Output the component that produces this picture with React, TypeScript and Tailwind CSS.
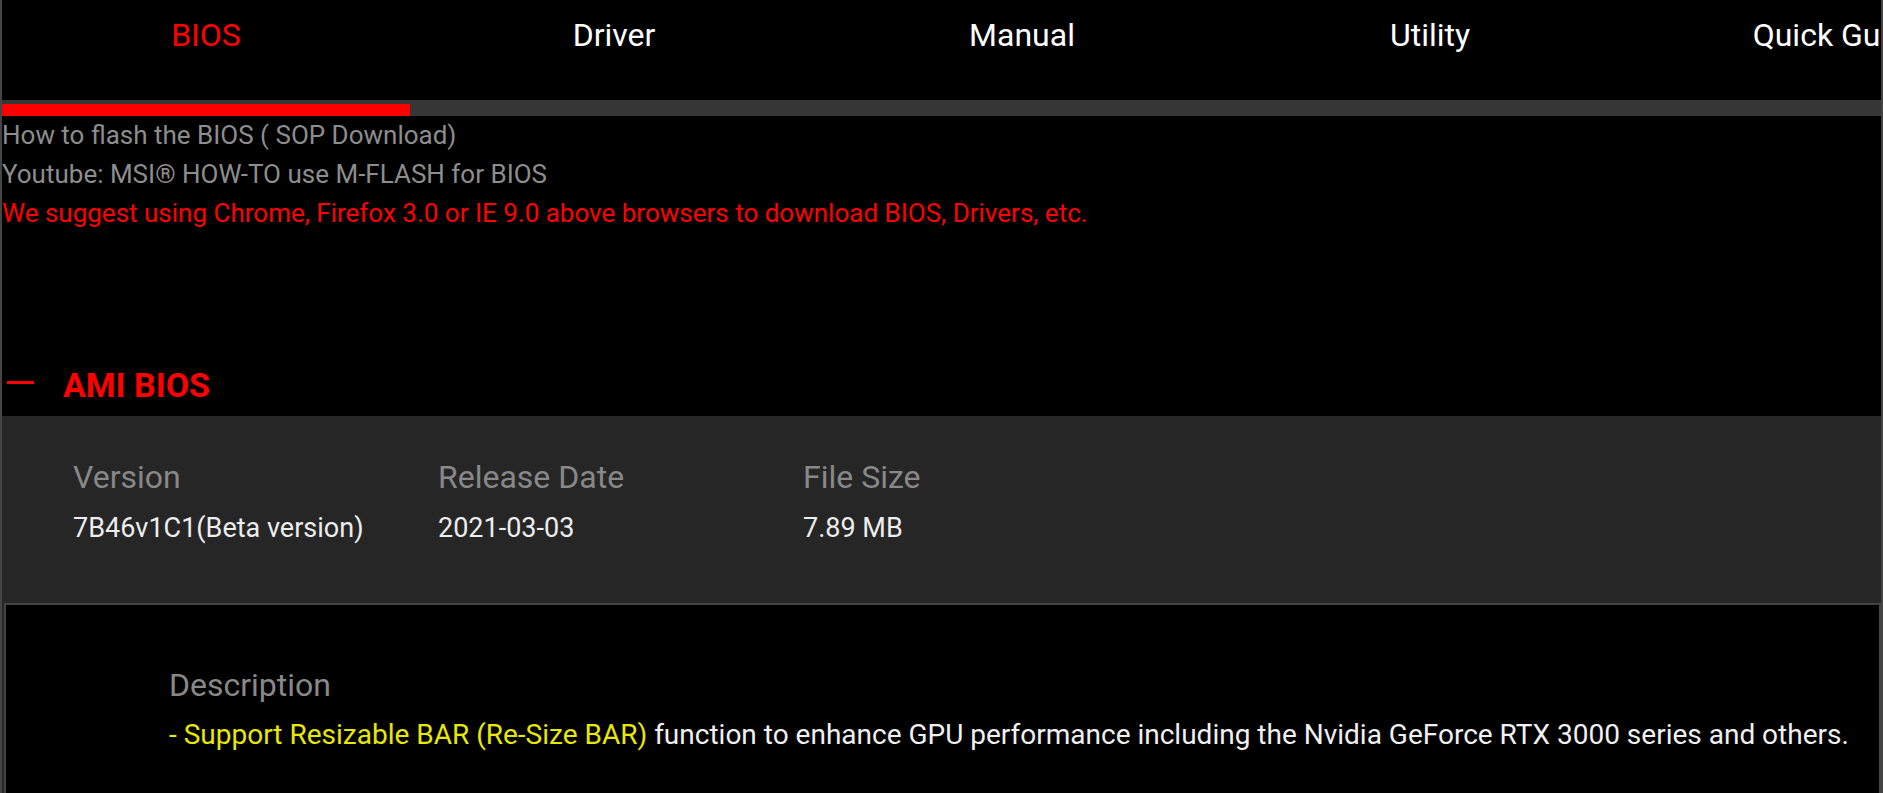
import React from "react";

const tabs = ["BIOS", "Driver", "Manual", "Utility", "Quick Guide"];

function Column({ label, value }: { label: string; value: string }) {
  return (
    <div className="w-[365px] shrink-0">
      <div className="text-[32px] leading-[40px] text-[#888888]">{label}</div>
      <div className="mt-[11px] text-[27px] leading-[40px] text-[#ededed]">{value}</div>
    </div>
  );
}

export default function App() {
  return (
    <div
      className="w-[1883px] h-[793px] overflow-hidden bg-black border-x-2 border-[#444444]"
      style={{ fontFamily: "Roboto, 'Noto Sans', sans-serif" }}
    >
      <nav className="flex h-[100px] overflow-hidden">
        {tabs.map((t, i) => (
          <div
            key={t}
            className={
              "w-[408px] shrink-0 text-center pt-[15px] text-[32px] leading-[40px] whitespace-nowrap " +
              (i === 0 ? "text-[#ff0000]" : "text-white")
            }
          >
            {t}
          </div>
        ))}
      </nav>
      <div className="h-[16px] bg-[#363636] pt-[4px]">
        <div className="w-[408px] h-[12px] bg-[#ff0000]" />
      </div>
      <div className="text-[26px] leading-[39px]">
        <div className="text-[#8d8d8d]">How to flash the BIOS ( SOP Download)</div>
        <div className="text-[#8d8d8d]">Youtube: MSI® HOW-TO use M-FLASH for BIOS</div>
        <div className="text-[#ff0000]">
          We suggest using Chrome, Firefox 3.0 or IE 9.0 above browsers to download BIOS, Drivers, etc.
        </div>
      </div>
      <div className="flex items-center pt-[132px] pb-[11px]">
        <div className="ml-[5px] mb-[6px] w-[27px] h-[3px] bg-[#ff0000]" />
        <div className="ml-[29px] text-[34px] leading-[40px] font-bold text-[#ff0000]">AMI BIOS</div>
      </div>
      <div className="bg-[#262626]">
        <div className="flex pl-[71px] pt-[41px] pb-[55px]">
          <Column label="Version" value="7B46v1C1(Beta version)" />
          <Column label="Release Date" value="2021-03-03" />
          <Column label="File Size" value="7.89 MB" />
        </div>
        <div className="ml-[2px] border-2 border-[#444444] bg-black pl-[163px] pt-[60px] h-[200px]">
          <div className="text-[32px] leading-[40px] text-[#888888]">Description</div>
          <div className="mt-[10px] text-[28px] leading-[40px] text-[#f0f0f0] whitespace-nowrap">
            <span className="text-[#e8e800]">- Support Resizable BAR (Re-Size BAR)</span> function to enhance GPU
            performance including the Nvidia GeForce RTX 3000 series and others.
          </div>
        </div>
      </div>
    </div>
  );
}
